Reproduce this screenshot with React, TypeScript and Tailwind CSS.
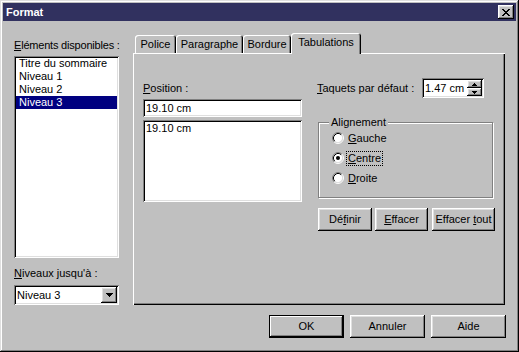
import React from "react";

const raised =
  "bg-[#c0c0c0] shadow-[inset_-1px_-1px_#000,inset_1px_1px_#fff,inset_-2px_-2px_#808080,inset_2px_2px_#dfdfdf]";
const sunken =
  "bg-white shadow-[inset_1px_1px_#808080,inset_-1px_-1px_#fff,inset_2px_2px_#000,inset_-2px_-2px_#dfdfdf]";

function Down({ size = 7 }: { size?: number }) {
  const rows = Math.ceil(size / 2);
  return (
    <svg width={size} height={rows} shapeRendering="crispEdges">
      {Array.from({ length: rows }).map((_, i) => (
        <rect key={i} x={i} y={i} width={size - i * 2} height={1} fill="#000" />
      ))}
    </svg>
  );
}

function Up({ size = 5 }: { size?: number }) {
  const rows = Math.ceil(size / 2);
  return (
    <svg width={size} height={rows} shapeRendering="crispEdges">
      {Array.from({ length: rows }).map((_, i) => (
        <rect key={i} x={rows - 1 - i} y={i} width={1 + i * 2} height={1} fill="#000" />
      ))}
    </svg>
  );
}

function CloseGlyph() {
  // pixel X, 8x7
  const rows = [
    [0, 6],
    [1, 5],
    [2, 4],
    [3, 3],
    [2, 4],
    [1, 5],
    [0, 6],
  ];
  return (
    <svg width="8" height="7" shapeRendering="crispEdges">
      {rows.map(([a, b], y) => (
        <g key={y}>
          <rect x={a} y={y} width={2} height={1} fill="#000" />
          <rect x={b} y={y} width={2} height={1} fill="#000" />
        </g>
      ))}
    </svg>
  );
}

function Radio({ checked }: { checked?: boolean }) {
  return (
    <svg width="12" height="12" viewBox="0 0 12 12" className="flex-shrink-0">
      <circle cx="6" cy="6" r="4.5" fill="#fff" />
      <path d="M2.11 9.89A5.5 5.5 0 0 1 9.89 2.11" stroke="#808080" fill="none" />
      <path d="M9.89 2.11A5.5 5.5 0 0 1 2.11 9.89" stroke="#fff" fill="none" />
      <path d="M2.82 9.18A4.5 4.5 0 0 1 9.18 2.82" stroke="#000" fill="none" />
      <path d="M9.18 2.82A4.5 4.5 0 0 1 2.82 9.18" stroke="#dfdfdf" fill="none" />
      {checked && <circle cx="6" cy="6" r="2" fill="#000" />}
    </svg>
  );
}

const LEVELS = ["Titre du sommaire", "Niveau 1", "Niveau 2", "Niveau 3"];

export default function App() {
  return (
    <div className="w-[519px] h-[352px] bg-[#c0c0c0] p-[3px] flex flex-col text-black text-[11px] leading-[13px] font-['Liberation_Sans',Arial,sans-serif] shadow-[inset_-1px_-1px_#000,inset_1px_1px_#dfdfdf,inset_-2px_-2px_#808080,inset_2px_2px_#fff]">
      {/* Title bar */}
      <div className="h-[18px] bg-[#31315f] flex items-center justify-between pl-[3px] pr-[2px]">
        <span className="text-white font-bold">Format</span>
        <button className={`w-[16px] h-[14px] flex items-center justify-center ${raised}`}>
          <CloseGlyph />
        </button>
      </div>

      {/* Body */}
      <div className="flex pl-[11px] gap-[14px]">
        {/* Left column */}
        <div className="w-[105px] pt-[18px] flex flex-col">
          <div className="h-[13px] mb-[4px] whitespace-nowrap tracking-[-0.2px]">
            <u>E</u>léments disponibles :
          </div>
          <div className={`h-[202px] p-[2px] pt-[1px] ${sunken}`}>
            {LEVELS.map((l, i) => (
              <div
                key={l}
                className={`h-[13px] pl-[3px] whitespace-nowrap ${
                  i === 3 ? "bg-[#000080] text-white" : ""
                }`}
              >
                {l}
              </div>
            ))}
          </div>
          <div className="mt-[9px] h-[13px] whitespace-nowrap">
            <u>N</u>iveaux jusqu'à :
          </div>
          <div className={`mt-[5px] h-[20px] p-[2px] flex items-center ${sunken}`}>
            <span className="flex-1 pl-[1px]">Niveau 3</span>
            <span className={`w-[16px] h-[16px] flex items-center justify-center ${raised}`}>
              <Down />
            </span>
          </div>
        </div>

        {/* Tab control */}
        <div className="w-[372px] pt-[12px] flex flex-col">
          <div className="h-[20px] flex items-end pl-[2px]">
            <div className="w-[41px] h-[18px] pt-[3px] text-center rounded-t-[3px] shadow-[inset_1px_1px_#fff,inset_-1px_0_#000,inset_-2px_0_#808080]">
              Police
            </div>
            <div className="w-[67px] h-[18px] pt-[3px] text-center rounded-t-[3px] shadow-[inset_1px_1px_#fff,inset_-1px_0_#000,inset_-2px_0_#808080]">
              Paragraphe
            </div>
            <div className="w-[48px] h-[18px] pt-[3px] text-center rounded-t-[3px] shadow-[inset_1px_1px_#fff,inset_-1px_0_#000,inset_-2px_0_#808080]">
              Bordure
            </div>
            <div className="relative z-10 w-[70px] h-[21px] -mb-px pt-[3px] text-center bg-[#c0c0c0] rounded-t-[3px] shadow-[inset_1px_1px_#fff,inset_-1px_0_#000,inset_-2px_0_#808080]">
              Tabulations
            </div>
          </div>

          <div className="h-[252px] flex pl-[10px] pt-[25px] gap-[16px] shadow-[inset_1px_1px_#fff,inset_-1px_-1px_#000,inset_-2px_-2px_#808080]">
            {/* Position */}
            <div className="w-[159px] pt-[4px] flex flex-col">
              <div className="h-[13px] mb-[4px]">
                <u>P</u>osition :
              </div>
              <div className={`h-[18px] px-[3px] flex items-center ${sunken}`}>19.10 cm</div>
              <div className={`mt-[3px] h-[82px] px-[3px] pt-[2px] ${sunken}`}>19.10 cm</div>
            </div>

            {/* Right side */}
            <div className="w-[177px] flex flex-col">
              <div className="h-[20px] flex items-center">
                <span className="w-[105px] -ml-px whitespace-nowrap">
                  <u>T</u>aquets par défaut :
                </span>
                <div className={`w-[62px] h-[20px] p-[2px] flex ${sunken}`}>
                  <span className="flex-1 pl-[1px] flex items-center">1.47 cm</span>
                  <div className="w-[15px] flex flex-col">
                    <span className={`h-[8px] flex items-center justify-center ${raised}`}>
                      <Up />
                    </span>
                    <span className={`h-[8px] flex items-center justify-center ${raised}`}>
                      <Down size={5} />
                    </span>
                  </div>
                </div>
              </div>

              <div className="relative mt-[24px] h-[76px] w-[175px] border border-[#808080] shadow-[inset_1px_1px_#fff,1px_1px_#fff] pt-[5px] pl-[13px]">
                <span className="absolute -top-[7px] left-[10px] px-[2px] bg-[#c0c0c0]">Alignement</span>
                {[
                  { k: "G", rest: "auche" },
                  { k: "C", rest: "entre", on: true },
                  { k: "D", rest: "roite" },
                ].map((r) => (
                  <div key={r.k} className="h-[20px] flex items-center gap-[2px]">
                    <Radio checked={r.on} />
                    <span
                      className={`px-[1px] border ${
                        r.on ? "border-dotted border-black" : "border-transparent"
                      }`}
                    >
                      <u>{r.k}</u>
                      {r.rest}
                    </span>
                  </div>
                ))}
              </div>

              <div className="mt-[10px] flex">
                <button className={`w-[54px] h-[23px] ${raised}`}>
                  Dé<u>f</u>inir
                </button>
                <button className={`ml-[3px] w-[53px] h-[23px] ${raised}`}>
                  <u>E</u>ffacer
                </button>
                <button className={`ml-[4px] w-[63px] h-[23px] whitespace-nowrap ${raised}`}>
                  Effacer <u>t</u>out
                </button>
              </div>
            </div>
          </div>
        </div>
      </div>

      {/* Bottom buttons */}
      <div className="mt-[10px] flex justify-end gap-[6px] pr-[10px]">
        <button className="w-[75px] h-[23px] border border-black bg-[#c0c0c0] shadow-[inset_-1px_-1px_#000,inset_1px_1px_#fff,inset_-2px_-2px_#808080]">
          OK
        </button>
        <button className={`w-[75px] h-[23px] ${raised}`}>Annuler</button>
        <button className={`w-[75px] h-[23px] ${raised}`}>Aide</button>
      </div>
    </div>
  );
}
